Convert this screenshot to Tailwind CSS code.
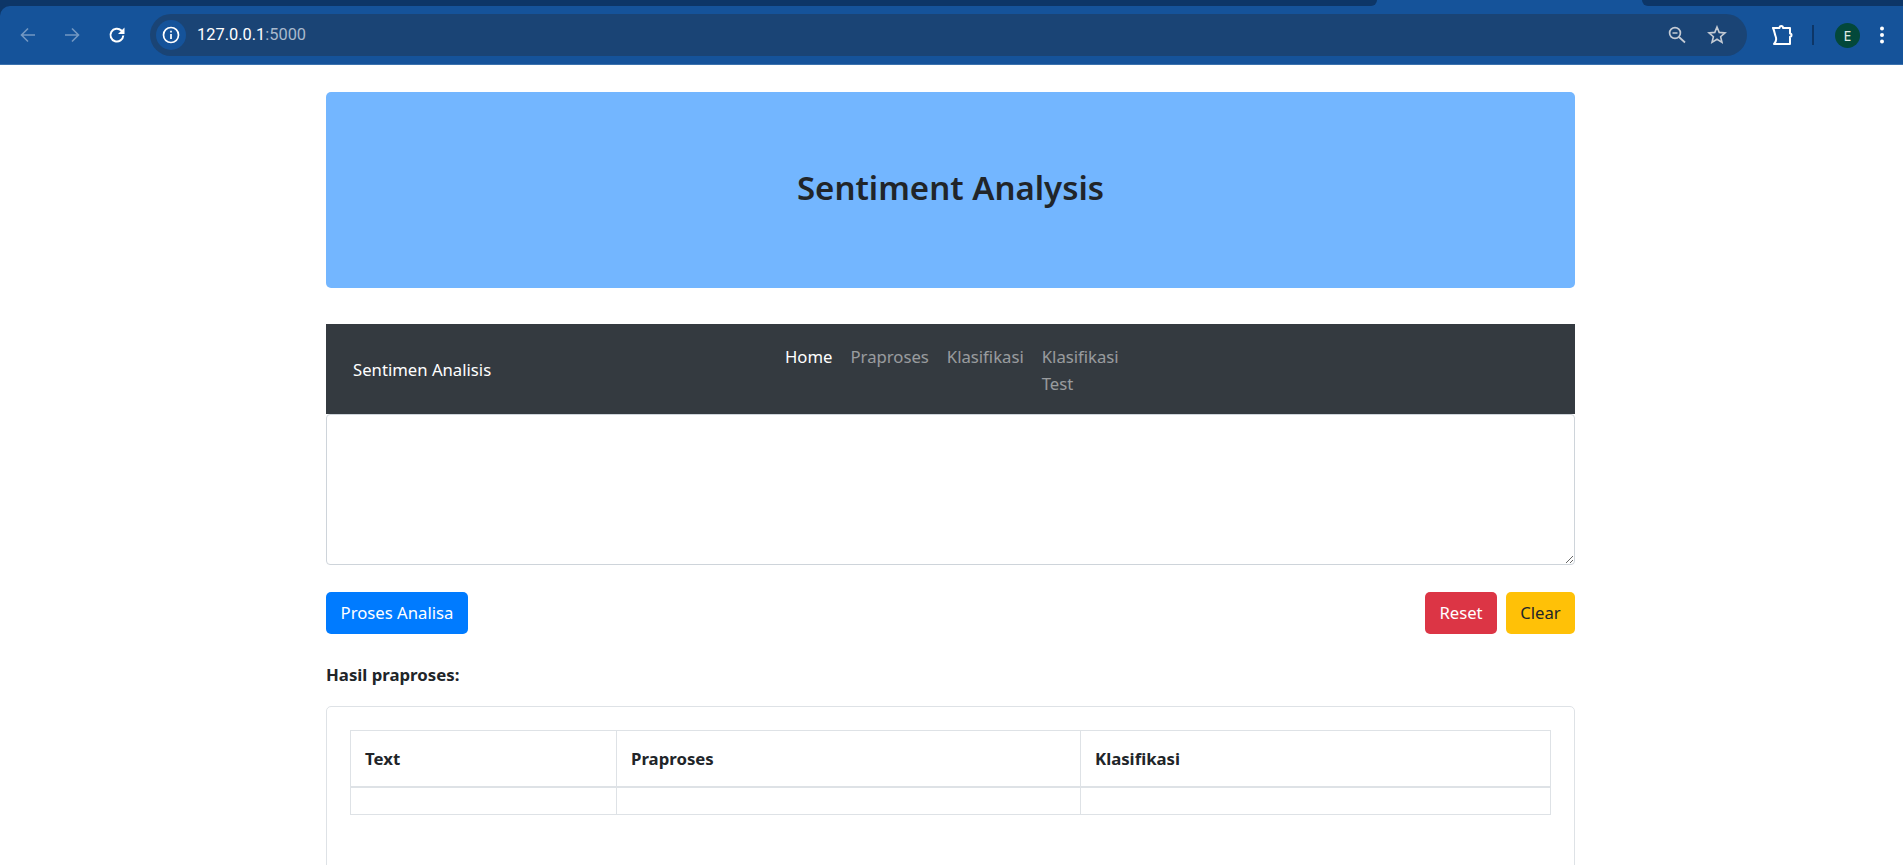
<!DOCTYPE html>
<html>
<head>
<meta charset="utf-8">
<title>Sentiment Analysis</title>
<script src="https://cdn.jsdelivr.net/npm/@tailwindcss/browser@4"></script>
</head>
<body class="bg-white h-[865px] overflow-hidden font-['Noto_Sans',sans-serif] text-[#212529]">
  <header class="relative h-[65px] bg-[#15539a] border-b border-[#3b72ae]">
    <div class="absolute left-0 top-0 w-[1377px] h-[6px] bg-[#0d3667] rounded-br-xl"></div>
    <div class="absolute right-0 top-0 w-[261px] h-[6px] bg-[#0d3667] rounded-bl-xl"></div>
    <div class="absolute left-0 top-[6px] w-[10px] h-[10px] bg-[#0d3667]"><div class="w-full h-full bg-[#15539a] rounded-tl-[10px]"></div></div>
    <div class="flex items-center h-[64px] pt-[6px]">
      <div class="flex items-center w-[150px] h-8 shrink-0">
        <svg class="ml-[18px] opacity-40" width="20" height="20" viewBox="0 0 20 20" fill="none" stroke="#fff" stroke-width="1.6"><path d="M17 10H3.500M10 3.500 3.500 10l6.500 6.500"/></svg>
        <svg class="ml-[24px] opacity-40" width="20" height="20" viewBox="0 0 20 20" fill="none" stroke="#fff" stroke-width="1.6"><path d="M3 10h13.500M10 3.500l6.500 6.500-6.500 6.500"/></svg>
        <svg class="ml-[25px]" width="20" height="20" viewBox="0 0 20 20" fill="none" stroke="#fff" stroke-width="2"><path d="M16.300 10.500a6.400 6.400 0 1 1-1.900-5L16.500 7.600"/><path d="M17.500 2.500v6.500H11z" fill="#fff" stroke="none"/></svg>
      </div>
      <div class="flex items-center w-[1597px] h-[42px] rounded-full bg-[#1a4475] shrink-0">
        <div class="flex items-center justify-center w-[30px] h-[30px] ml-[6px] rounded-full bg-[#15539a]">
          <svg width="18" height="18" viewBox="0 0 18 18" fill="none" stroke="#fff" stroke-width="1.7"><circle cx="9" cy="9" r="7.500"/><path d="M9 8v5M9 4.800v1.800"/></svg>
        </div>
        <div class="ml-[11px] pt-[1px] text-[16.400px] text-white font-['Roboto',sans-serif]">127.0.0.1<span class="text-[#a9b9cc]">:5000</span></div>
        <div class="flex items-center gap-[20px] ml-auto mr-[20px]">
          <svg width="20" height="20" viewBox="0 0 20 20" fill="none" stroke="#c4cbd4" stroke-width="1.7"><circle cx="8" cy="8" r="5.400"/><path d="M5.500 8h5M12 12l6 5.500"/></svg>
          <svg width="20" height="20" viewBox="0 0 20 20" fill="none" stroke="#c4cbd4" stroke-width="1.600"><path d="M10 2l2.200 5.400 5.800.5-4.400 3.800 1.400 5.700L10 14.300l-5 3.100 1.400-5.700L2 7.900l5.800-.5z"/></svg>
        </div>
      </div>
      <div class="flex items-center h-8">
        <svg class="ml-[24px]" width="22" height="22" viewBox="0 0 22 22" fill="none" stroke="#fff" stroke-width="2" stroke-linejoin="round"><path d="M2 4h6.500c0-2.600 3.500-2.600 3.500 0h7v5.500c2 0 2 3.200 0 3.200V20H3c2.500-2.500 2.500-5.500 1.500-8S3.500 7 2 4z"/></svg>
        <div class="ml-[19px] w-[2px] h-5 bg-[#0d3667]"></div>
        <div class="ml-[21px] flex items-center justify-center w-[25px] h-[25px] rounded-full bg-[#03483a] text-[#dfe8e4] text-[14px]">E</div>
        <svg class="ml-[19px]" width="6" height="20" viewBox="0 0 6 20" fill="#fff"><circle cx="3" cy="3.500" r="2"/><circle cx="3" cy="10" r="2"/><circle cx="3" cy="16.500" r="2"/></svg>
      </div>
    </div>
  </header>

  <main class="w-[1249px] h-[800px] overflow-hidden ml-[326px]">
    <section class="mt-[27px] h-[196px] pb-[5px] flex items-center justify-center bg-[#73b6ff] rounded-[5px]">
      <h1 class="text-[33px] font-semibold text-[#212529]">Sentiment Analysis</h1>
    </section>

    <nav class="mt-[36px] h-[90px] flex bg-[#343a40] text-[16.700px]">
      <a class="self-center ml-[27px] w-[432px] pt-[2px] text-white">Sentimen Analisis</a>
      <ul class="flex items-start pt-[19px] gap-[18px] leading-[27px] text-white/50 w-[400px]">
        <li class="text-white">Home</li>
        <li>Praproses</li>
        <li>Klasifikasi</li>
        <li class="w-[76px]">Klasifikasi Test</li>
      </ul>
    </nav>

    <textarea class="block w-full h-[151px] bg-white border border-[#ced4da] rounded-[4px] resize-y"></textarea>

    <div class="mt-[27px] flex items-center">
      <button class="w-[142px] h-[42px] bg-[#007bff] text-white text-[16.700px] rounded-[5px]">Proses Analisa</button>
      <button class="ml-auto w-[72px] h-[42px] bg-[#dc3545] text-white text-[16.700px] rounded-[5px]">Reset</button>
      <button class="ml-[9px] w-[69px] h-[42px] bg-[#ffc107] text-[#212529] text-[16.700px] rounded-[5px]">Clear</button>
    </div>

    <h2 class="mt-[29px] text-[16.800px] font-bold leading-[24px] text-[#212529]">Hasil praproses:</h2>

    <div class="mt-[19px] h-[300px] border border-[#dee2e6] rounded-[5px] pt-[23px] px-[23px]">
      <table class="w-[1201px] border-collapse text-[16.800px] text-left table-fixed">
        <thead>
          <tr class="h-[56px]">
            <th class="w-[266px] px-[14px] border border-[#dee2e6] border-b-2 font-bold">Text</th>
            <th class="w-[464px] px-[14px] border border-[#dee2e6] border-b-2 font-bold">Praproses</th>
            <th class="px-[14px] border border-[#dee2e6] border-b-2 font-bold">Klasifikasi</th>
          </tr>
        </thead>
        <tbody>
          <tr class="h-[28px]">
            <td class="border border-[#dee2e6]"></td>
            <td class="border border-[#dee2e6]"></td>
            <td class="border border-[#dee2e6]"></td>
          </tr>
        </tbody>
      </table>
    </div>
  </main>
</body>
</html>
